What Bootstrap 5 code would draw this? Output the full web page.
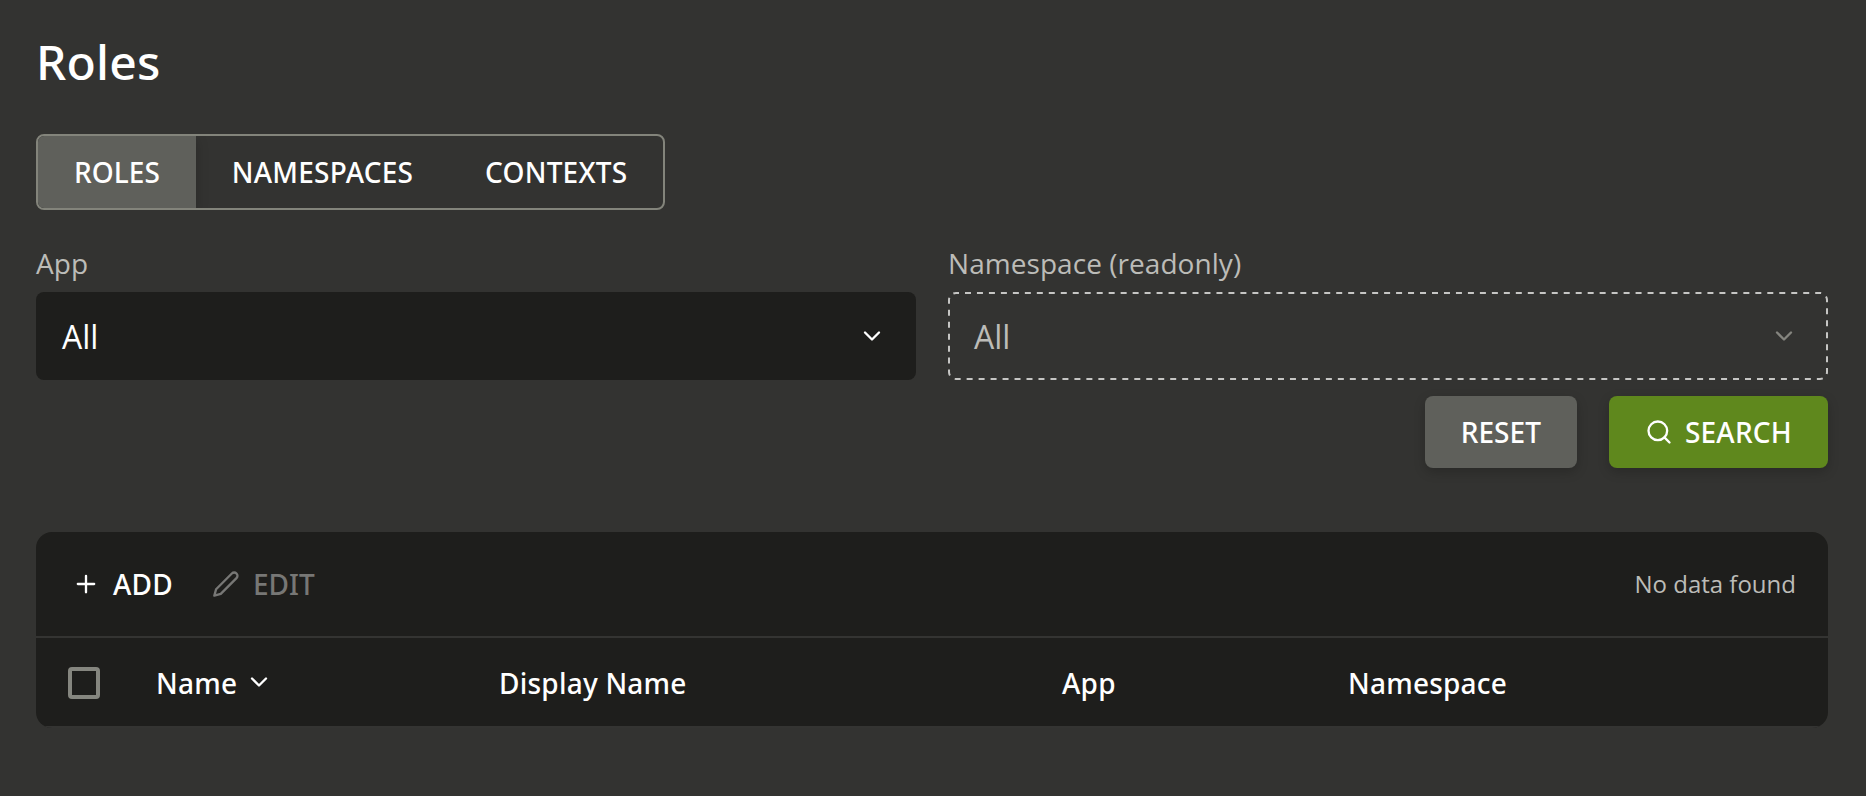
<!DOCTYPE html>
<html lang="en" data-bs-theme="dark">
<head>
<meta charset="utf-8">
<meta name="viewport" content="width=device-width, initial-scale=1">
<title>Roles</title>
<link rel="stylesheet" href="https://cdn.jsdelivr.net/npm/bootstrap@5.3.0/dist/css/bootstrap.min.css">
<style>
  body { background: #333331; color: #fff; font-family: "Open Sans", "Noto Sans", sans-serif; font-size: 28px; line-height: 40px; }
  .page { padding: 30px 38px 0 36px; }
  .page-title, .btn, .heads { font-family: "Noto Sans", "Open Sans", sans-serif; font-weight: 500; letter-spacing: .22px; }
  .page-title { font-size: 48px; line-height: 64px; margin-bottom: 40px; }
  .btn { --bs-btn-font-family: "Noto Sans", "Open Sans", sans-serif; --bs-btn-font-size: 28px; --bs-btn-font-weight: 500; --bs-btn-color: #fff; --bs-btn-border-width: 0; --bs-btn-border-radius: 8px; --bs-btn-padding-y: 0; --bs-btn-padding-x: 36px; --bs-btn-line-height: 40px; height: 72px; }
  .btn-current, .btn-reset, .btn-edit { letter-spacing: .05px; }
  .tabs { border: 2px solid #83847b; border-radius: 8px; overflow: hidden; }
  .btn-current { background: #5f605b; box-shadow: 0 4px 12px rgba(0,0,0,.2); }
  .fields { --bs-gutter-x: 32px; margin-top: 34px; }
  .form-label { font-size: 28px; color: #bcbcb8; margin-bottom: 10px; line-height: 38px; letter-spacing: .05px; }
  .picker { height: 88px; padding: 0 30px 0 26px; border-radius: 8px; background: #1e1e1c; font-size: 32px; }
  .picker span { padding-top: 2px; }
  .picker-readonly { background: transparent; color: #bcbcb8; }
  .picker-readonly .chevron { color: #85857f; }
  .dashes { position: absolute; inset: 0; width: 100%; height: 100%; color: #c6c6c4; }
  .dashes rect { x: 1px; y: 1px; width: calc(100% - 2px); height: calc(100% - 2px); rx: 7px; stroke-width: 2px; stroke-linecap: butt; stroke-dasharray: 6 5.975; stroke-dashoffset: 3; }
  .actions { gap: 32px; margin: 16px 0 64px; }
  .btn-reset { background: #5f605b; }
  .btn-search { background: #5f881d; }
  .btn-reset, .btn-search { box-shadow: 0 4px 12px rgba(0,0,0,.2); }
  .btn svg { margin-right: 12px; }
  .btn-add svg, .btn-edit svg { margin-right: 13px; }
  .panel { --bs-card-bg: #1e1e1c; --bs-card-border-width: 0; --bs-card-border-radius: 16px; height: 196px; overflow: hidden; color: #fff; }
  .toolbar { height: 106px; padding: 0 32px 0 36px; border-bottom: 2px solid #343432; }
  .toolbar .btn { --bs-btn-padding-x: 0; --bs-btn-disabled-border-color: transparent; --bs-btn-disabled-opacity: 1; --bs-btn-disabled-color: #777775; }
  .btn-edit { margin-left: 39px; }
  .toolbar-status { font-size: 24px; color: #bcbcb8; }
  .heads { height: 90px; border-bottom: 2px solid #343432; display: grid; grid-template-columns: 120px 343px 563px 286px 1fr; align-items: center; }
  .heads span { padding-top: 2px; }
  .form-check-input { width: 32px; height: 32px; margin: 2px 0 0 32px; border: 4px solid #85867f; border-radius: 4px !important; background: transparent; }
  svg { width: 28px; height: 28px; fill: none; stroke: currentColor; stroke-width: 2; stroke-linecap: round; stroke-linejoin: round; flex: none; }
</style>
</head>
<body>
<main class="page">
  <h1 class="page-title">Roles</h1>
  <div class="tabs d-inline-flex align-top">
    <button class="btn btn-current rounded-0">ROLES</button>
    <button class="btn rounded-0">NAMESPACES</button>
    <button class="btn rounded-0">CONTEXTS</button>
  </div>
  <div class="row fields">
    <div class="col-6">
      <label class="form-label d-block">App</label>
      <div class="picker d-flex align-items-center justify-content-between"><span>All</span><svg class="chevron" viewBox="0 0 24 24"><path d="M6 9l6 6 6-6"/></svg></div>
    </div>
    <div class="col-6">
      <label class="form-label d-block">Namespace (readonly)</label>
      <div class="picker picker-readonly position-relative d-flex align-items-center justify-content-between"><svg class="dashes"><rect/></svg><span>All</span><svg class="chevron" viewBox="0 0 24 24"><path d="M6 9l6 6 6-6"/></svg></div>
    </div>
  </div>
  <div class="actions d-flex justify-content-end">
    <button class="btn btn-reset">RESET</button>
    <button class="btn btn-search d-flex align-items-center"><svg viewBox="0 0 24 24"><circle cx="11" cy="11" r="8"/><path d="M21 21l-4.35-4.35"/></svg>SEARCH</button>
  </div>
  <section class="card panel">
    <div class="toolbar d-flex align-items-center">
      <button class="btn btn-add d-flex align-items-center"><svg viewBox="0 0 24 24"><path d="M12 5v14M5 12h14"/></svg>ADD</button>
      <button class="btn btn-edit d-flex align-items-center" disabled><svg viewBox="0 0 24 24"><path d="M17 3a2.828 2.828 0 1 1 4 4L7.5 20.5 2 22l1.5-5.5L17 3z"/></svg>EDIT</button>
      <span class="toolbar-status ms-auto">No data found</span>
    </div>
    <div class="heads">
      <input class="form-check-input" type="checkbox" aria-label="Select all">
      <div class="d-flex align-items-center"><span>Name</span><svg class="ms-2" viewBox="0 0 24 24"><path d="M6 9l6 6 6-6"/></svg></div>
      <span>Display Name</span>
      <span>App</span>
      <span>Namespace</span>
    </div>
  </section>
</main>
<script src="https://cdn.jsdelivr.net/npm/bootstrap@5.3.0/dist/js/bootstrap.bundle.min.js"></script>
</body>
</html>
